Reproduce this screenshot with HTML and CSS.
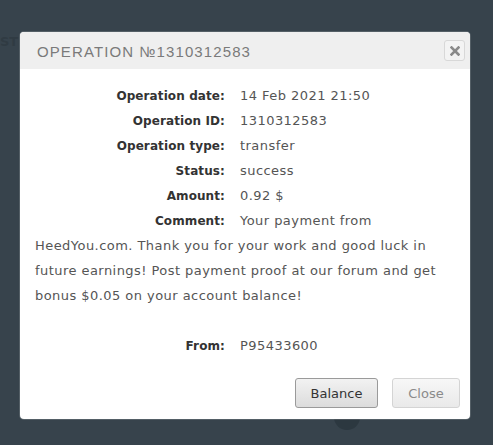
FILE: index.html
```html
<!DOCTYPE html>
<html>
<head>
<meta charset="utf-8">
<link rel="stylesheet" href="styles.css">
</head>
<body>
<div class="page">
  <div class="ghost-text">ST</div>
  <div class="ghost-dot"></div>
  <div class="dialog">
    <div class="dialog-header">
      <div class="dialog-title">OPERATION №1310312583</div>
      <button class="x-btn" aria-label="close">
        <svg width="10" height="10" viewBox="0 0 10 10"><path d="M1.5 1.5 L8.5 8.5 M8.5 1.5 L1.5 8.5" stroke="#8a8a8a" stroke-width="2.6" stroke-linecap="square"/></svg>
      </button>
    </div>
    <div class="dialog-body">
      <div class="row"><span class="label">Operation date:</span><span class="value">14 Feb 2021 21:50</span></div>
      <div class="row"><span class="label">Operation ID:</span><span class="value">1310312583</span></div>
      <div class="row"><span class="label">Operation type:</span><span class="value">transfer</span></div>
      <div class="row"><span class="label">Status:</span><span class="value">success</span></div>
      <div class="row"><span class="label">Amount:</span><span class="value">0.92 $</span></div>
      <div class="row"><span class="label">Comment:</span><span class="value">Your payment from HeedYou.com. Thank you for your work and good luck in future earnings! Post payment proof at our forum and get bonus $0.05 on your account balance!</span></div>
      <div class="row gap"><span class="label">From:</span><span class="value">P95433600</span></div>
    </div>
    <div class="dialog-footer">
      <button class="btn btn-primary">Balance</button>
      <button class="btn btn-muted">Close</button>
    </div>
  </div>
</div>
</body>
</html>
```
FILE: styles.css
```css
html, body {
  margin: 0;
  padding: 0;
}
body {
  background: #37434c;
  width: 493px;
  height: 445px;
  overflow: hidden;
  font-family: "DejaVu Sans", Verdana, sans-serif;
}
.page {
  position: relative;
  width: 493px;
  height: 445px;
  padding-top: 32px;
  padding-left: 20px;
  box-sizing: border-box;
}
.ghost-text {
  position: absolute;
  left: 0;
  top: 34px;
  font-size: 13px;
  color: #303b43;
  font-weight: bold;
}
.ghost-dot {
  position: absolute;
  left: 334px;
  top: 404px;
  width: 26px;
  height: 26px;
  border-radius: 50%;
  background: #2c3840;
}
.dialog {
  position: relative;
  width: 450px;
  height: 387px;
  background: #fff;
  border-radius: 4px;
  box-shadow: 0 0 0 1px rgba(255,255,255,0.15);
  display: flex;
  flex-direction: column;
  overflow: hidden;
}
.dialog-header {
  height: 37px;
  background: #efefef;
  display: flex;
  align-items: center;
  justify-content: space-between;
  padding: 0 5px 0 17px;
}
.dialog-title {
  font-family: "Liberation Sans", Arial, sans-serif;
  font-size: 15px;
  letter-spacing: 1.1px;
  color: #7a7a7a;
  padding-top: 1px;
}
.x-btn {
  width: 21px;
  height: 21px;
  border: 1px solid #d8d8d8;
  border-radius: 3px;
  background: #f3f3f3;
  padding: 0;
  display: flex;
  align-items: center;
  justify-content: center;
}
.dialog-body {
  flex: 1;
  padding: 14px 15px 0 15px;
  font-size: 13px;
  line-height: 25px;
  color: #555;
}
.row.gap {
  margin-top: 25px;
}
.label {
  display: inline-block;
  width: 190px;
  text-align: right;
  font-weight: bold;
  color: #333;
  margin-right: 15px;
  font-size: 12px;
  line-height: 14px;
  letter-spacing: 0.1px;
}
.value {
  color: #555;
  letter-spacing: 0.45px;
}
.dialog-footer {
  display: flex;
  justify-content: flex-end;
  gap: 14px;
  padding: 0 10px 11px 0;
}
.btn {
  height: 30px;
  border-radius: 3px;
  font-family: "DejaVu Sans", Verdana, sans-serif;
  font-size: 13px;
  padding: 0;
}
.btn-primary {
  width: 83px;
  border: 1px solid #9a9a9a;
  background: linear-gradient(#f2f2f2, #dcdcdc);
  color: #333;
}
.btn-muted {
  width: 68px;
  border: 1px solid #d4d4d4;
  background: linear-gradient(#f7f7f7, #e9e9e9);
  color: #8a8a8a;
}
```
